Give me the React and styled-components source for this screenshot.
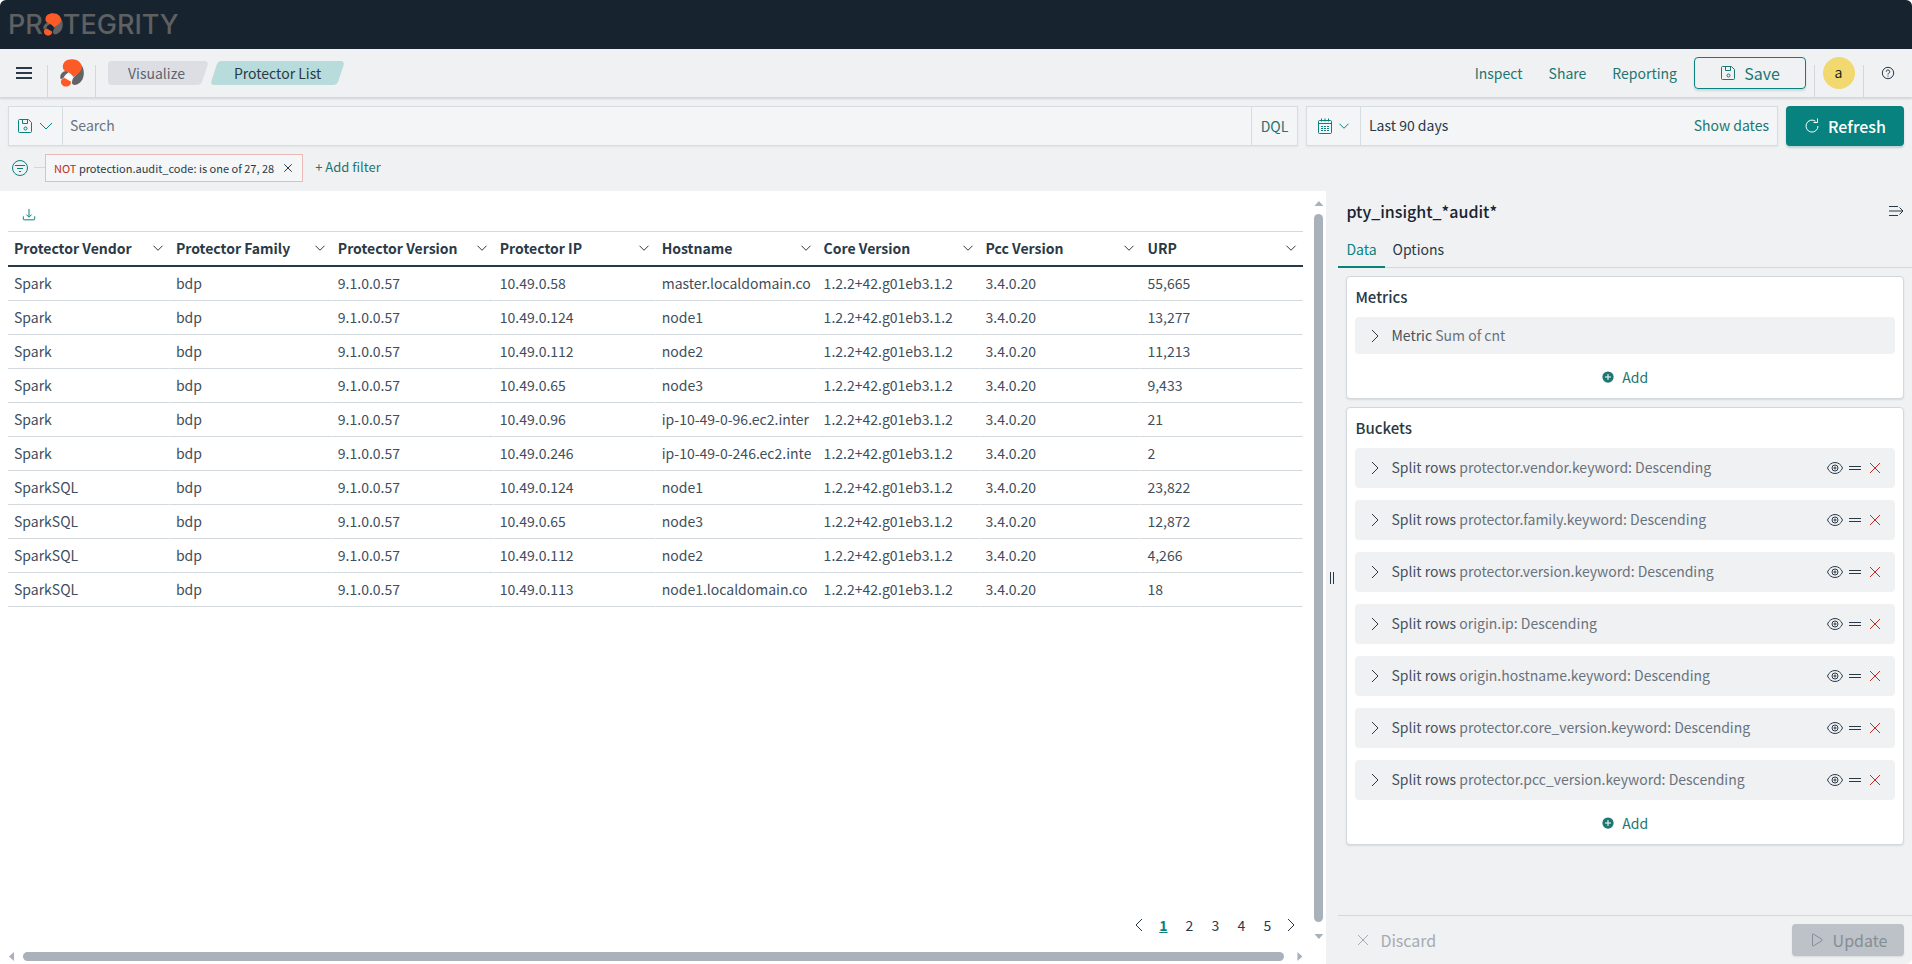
import React from 'react';
import styled, { createGlobalStyle, css } from 'styled-components';

const columns = [
  'Protector Vendor',
  'Protector Family',
  'Protector Version',
  'Protector IP',
  'Hostname',
  'Core Version',
  'Pcc Version',
  'URP',
];

const hosts = [
  ['Spark', '10.49.0.58', 'master.localdomain.co', '55,665'],
  ['Spark', '10.49.0.124', 'node1', '13,277'],
  ['Spark', '10.49.0.112', 'node2', '11,213'],
  ['Spark', '10.49.0.65', 'node3', '9,433'],
  ['Spark', '10.49.0.96', 'ip-10-49-0-96.ec2.inter', '21'],
  ['Spark', '10.49.0.246', 'ip-10-49-0-246.ec2.inte', '2'],
  ['SparkSQL', '10.49.0.124', 'node1', '23,822'],
  ['SparkSQL', '10.49.0.65', 'node3', '12,872'],
  ['SparkSQL', '10.49.0.112', 'node2', '4,266'],
  ['SparkSQL', '10.49.0.113', 'node1.localdomain.co', '18'],
];

const rows = hosts.map(([vendor, ip, host, urp]) => [
  vendor,
  'bdp',
  '9.1.0.0.57',
  ip,
  host,
  '1.2.2+42.g01eb3.1.2',
  '3.4.0.20',
  urp,
]);

const buckets = [
  'protector.vendor.keyword',
  'protector.family.keyword',
  'protector.version.keyword',
  'origin.ip',
  'origin.hostname.keyword',
  'protector.core_version.keyword',
  'protector.pcc_version.keyword',
];

const Icon = ({ size = 16, children }) => (
  <Svg width={size} height={size} viewBox='0 0 16 16' aria-hidden='true'>
    {children}
  </Svg>
);

const SaveIcon = () => (
  <Icon>
    <path d='M2.5 1.5h9l3 3v9a1 1 0 0 1-1 1h-11a1 1 0 0 1-1-1v-11a1 1 0 0 1 1-1z' />
    <path d='M5.5 1.5v4h5v-4' />
    <circle cx='8.5' cy='10.5' r='1.5' />
  </Icon>
);

const ChevronDown = ({ size }) => (
  <Icon size={size}>
    <path d='M2 5l6 6 6-6' />
  </Icon>
);

const ChevronRight = () => (
  <Icon>
    <path d='M5 2l6 6-6 6' />
  </Icon>
);

const ChevronLeft = () => (
  <Icon>
    <path d='M11 2L5 8l6 6' />
  </Icon>
);

const CrossIcon = ({ size }) => (
  <Icon size={size}>
    <path d='M3 3l10 10M13 3L3 13' />
  </Icon>
);

const CalendarIcon = () => (
  <Icon>
    <rect x='1.5' y='2.5' width='13' height='13' rx='1' />
    <path d='M4.5 0.5v3M8 0.5v3M11.5 0.5v3M2 5.5h12' />
    <path d='M4 8.5h2M7 8.5h2M10 8.5h2M4 10.5h2M7 10.5h2M10 10.5h2M4 12.5h2M7 12.5h2M10 12.5h2' />
  </Icon>
);

const RefreshIcon = () => (
  <Icon>
    <path d='M11.5 3.2A6 6 0 1 0 14 8' />
    <path d='M13.5 0.5v4h-4' />
  </Icon>
);

const HelpIcon = () => (
  <Icon size={14}>
    <circle cx='8' cy='8' r='6.5' />
    <path d='M6 6.5a2 2 0 1 1 2.6 1.9c-.4.1-.6.4-.6.8v.6M8 11v1.2' />
  </Icon>
);

const FilterIcon = () => (
  <Icon>
    <circle cx='8' cy='8' r='7.5' />
    <path d='M3 5.5h10M5 8.5h6M7 11.5h2' />
  </Icon>
);

const DownloadIcon = () => (
  <Icon size={14}>
    <path d='M8 1v9M5 7.5l3 3 3-3' />
    <path d='M1.5 9.5v3a1 1 0 0 0 1 1h11a1 1 0 0 0 1-1v-3' />
  </Icon>
);

const CollapseIcon = () => (
  <Icon>
    <path d='M1 3.5h9M1 8h13.5M1 12.5h9M11.5 4.5L15 8l-3.5 3.5' />
  </Icon>
);

const EyeIcon = () => (
  <Icon>
    <path d='M0.5 8C2 4.5 4.8 2.5 8 2.5S14 4.5 15.5 8C14 11.5 11.2 13.5 8 13.5S2 11.5 0.5 8z' />
    <circle cx='8' cy='8' r='3' />
    <circle cx='8' cy='8' r='1' />
  </Icon>
);

const GrabIcon = () => (
  <Icon>
    <path d='M2 6.5h12M2 9.5h12' />
  </Icon>
);

const PlayIcon = () => (
  <Icon>
    <path d='M3.5 2.7v10.600a.7.7 0 0 0 1 .6l8.500-5.300a.7.7 0 0 0 0-1.200L4.500 2.100a.7.7 0 0 0-1 .6z' />
  </Icon>
);

const PlusIcon = () => (
  <Svg width='12' height='12' viewBox='0 0 16 16' aria-hidden='true'>
    <circle cx='8' cy='8' r='7.5' fill='currentColor' stroke='none' />
    <path d='M8 4v8M4 8h8' stroke='#fff' />
  </Svg>
);

const Mark = ({ width, height, band }) => (
  <svg width={width} height={height} viewBox='0 0 24 28' aria-hidden='true'>
    <path d='M21.500 6c2.500 3.500 3 9 1.500 13-1.500 4-5 7-8.500 7-1.500 0-2.500-1-2.500-2.500 0-3 1.500-5.500 4.500-8 3-2.500 5-5 5-9.500z' fill='#626366' />
    <path d='M0.500 20C-.5 15.500 2 12 8 11.500L8 14c-1.500.5-2.500 1.500-3.500 3-.5 1.500-1.500 3-4 3z' fill='#626366' />
    <path d='M2.800 8C2.800 3 6.500.3 12 .3c5.500 0 9.800 3.500 9.800 7.900 0 4.300-4 6.300-8.300 9.800C12 16 10.500 14.300 8.500 13.500 5 12.500 2.800 11 2.800 8z' fill='#fc5a27' />
    <path d='M1 22c.5-2 2-3 4-3l5.800 3c.7 2.500-.8 5-3.800 5.500-3.500.5-6.500-2-6-5.500z' fill='#fc5a27' />
    <path d='M7.500 14.500l5 3.800-1.700 4.200L4.800 19z' fill={band} />
  </svg>
);

const Bucket = ({ field }) => (
  <Accordion $tall>
    <AccordionToggle type='button'>
      <ChevronRight />
      <AccordionText>
        Split rows <Muted>{field}: Descending</Muted>
      </AccordionText>
    </AccordionToggle>
    <RowActions>
      <IconButton type='button' aria-label='Disable aggregation'>
        <EyeIcon />
      </IconButton>
      <IconButton type='button' aria-label='Change order'>
        <GrabIcon />
      </IconButton>
      <IconButton type='button' aria-label='Remove dimension' $danger>
        <CrossIcon />
      </IconButton>
    </RowActions>
  </Accordion>
);

const App = () => {
  return (
    <Page>
      <GlobalStyle />
      <TopBar>
        <Brand>
          <span>PR</span>
          <Mark width={20} height={23} band='#17242f' />
          <span>TEGRITY</span>
        </Brand>
      </TopBar>

      <Header>
        <HeaderCell>
          <IconButton type='button' aria-label='Toggle navigation'>
            <Svg width='16' height='12' viewBox='0 0 16 12' aria-hidden='true'>
              <path d='M0 1h16M0 6h16M0 11h16' strokeWidth='2' />
            </Svg>
          </IconButton>
        </HeaderCell>
        <HeaderCell>
          <HomeLink href='#' aria-label='Home'>
            <Mark width={24} height={28} band='#fff' />
          </HomeLink>
        </HeaderCell>
        <Breadcrumbs aria-label='Breadcrumbs'>
          <CrumbFirst href='#'>Visualize</CrumbFirst>
          <CrumbLast aria-current='page'>Protector List</CrumbLast>
        </Breadcrumbs>
        <Menu>
          <TextLink href='#'>Inspect</TextLink>
          <TextLink href='#'>Share</TextLink>
          <TextLink href='#'>Reporting</TextLink>
          <SaveButton type='button'>
            <SaveIcon />
            Save
          </SaveButton>
        </Menu>
        <HeaderSide>
          <Avatar type='button'>a</Avatar>
        </HeaderSide>
        <HeaderSide>
          <IconButton type='button' aria-label='Help'>
            <HelpIcon />
          </IconButton>
        </HeaderSide>
      </Header>

      <QueryBar>
        <Group $grow>
          <GroupButton type='button' aria-label='Saved queries'>
            <SaveIcon />
            <ChevronDown size={16} />
          </GroupButton>
          <SearchInput type='text' placeholder='Search' aria-label='Search' />
          <DqlButton type='button'>DQL</DqlButton>
        </Group>
        <Group>
          <GroupButton type='button' aria-label='Quick select'>
            <CalendarIcon />
            <ChevronDown size={12} />
          </GroupButton>
          <DateButton type='button'>
            Last 90 days
            <Teal>Show dates</Teal>
          </DateButton>
        </Group>
        <RefreshButton type='button'>
          <RefreshIcon />
          Refresh
        </RefreshButton>
      </QueryBar>

      <FilterBar>
        <IconButton type='button' aria-label='Change all filters' $teal>
          <FilterIcon />
        </IconButton>
        <Branch />
        <FilterPill>
          <span>
            <Not>NOT</Not> protection.audit_code: is one of 27, 28
          </span>
          <IconButton type='button' aria-label='Delete filter'>
            <CrossIcon size={12} />
          </IconButton>
        </FilterPill>
        <AddFilter type='button'>+ Add filter</AddFilter>
      </FilterBar>

      <Main>
        <Visualization>
          <VisBody>
            <VisContent>
              <TableToolbar>
                <IconButton type='button' aria-label='Download' $teal>
                  <DownloadIcon />
                </IconButton>
              </TableToolbar>
              <Table>
                <thead>
                  <tr>
                    {columns.map((c) => (
                      <Th key={c} scope='col'>
                        <ThInner type='button'>
                          {c}
                          <ChevronDown size={12} />
                        </ThInner>
                      </Th>
                    ))}
                  </tr>
                </thead>
                <tbody>
                  {rows.map((row, i) => (
                    <tr key={i}>
                      {row.map((cell, j) => (
                        <Td key={j}>
                          <Clip>{cell}</Clip>
                        </Td>
                      ))}
                    </tr>
                  ))}
                </tbody>
              </Table>
              <Pagination aria-label='Pagination'>
                <PageButton type='button' aria-label='Previous page' $arrow>
                  <ChevronLeft />
                </PageButton>
                {[1, 2, 3, 4, 5].map((n) => (
                  <PageButton type='button' key={n} $active={n === 1}>
                    {n}
                  </PageButton>
                ))}
                <PageButton type='button' aria-label='Next page' $arrow>
                  <ChevronRight />
                </PageButton>
              </Pagination>
            </VisContent>
            <ScrollY>
              <Arrow $dir='up' />
              <Thumb />
              <Arrow $dir='down' />
            </ScrollY>
          </VisBody>
          <ScrollX>
            <Arrow $dir='left' />
            <Thumb />
            <Arrow $dir='right' />
          </ScrollX>
        </Visualization>

        <Resizer>
          <Svg width='4' height='12' viewBox='0 0 4 12' aria-hidden='true'>
            <path d='M0.5 0v12M3.5 0v12' />
          </Svg>
        </Resizer>

        <Sidebar>
          <SidebarHead>
            <SidebarTitle>pty_insight_*audit*</SidebarTitle>
            <IconButton type='button' aria-label='Toggle sidebar'>
              <CollapseIcon />
            </IconButton>
          </SidebarHead>
          <Tabs role='tablist'>
            <Tab type='button' role='tab' aria-selected='true' $active>
              Data
            </Tab>
            <Tab type='button' role='tab' aria-selected='false'>
              Options
            </Tab>
          </Tabs>
          <Panels>
            <Panel>
              <PanelTitle>Metrics</PanelTitle>
              <Accordion>
                <AccordionToggle type='button'>
                  <ChevronRight />
                  <AccordionText>
                    Metric <Muted>Sum of cnt</Muted>
                  </AccordionText>
                </AccordionToggle>
              </Accordion>
              <AddButton type='button'>
                <PlusIcon />
                Add
              </AddButton>
            </Panel>
            <Panel>
              <PanelTitle>Buckets</PanelTitle>
              <BucketList>
                {buckets.map((b) => (
                  <Bucket key={b} field={b} />
                ))}
              </BucketList>
              <AddButton type='button'>
                <PlusIcon />
                Add
              </AddButton>
            </Panel>
          </Panels>
          <SidebarFooter>
            <DiscardButton type='button' disabled>
              <CrossIcon />
              Discard
            </DiscardButton>
            <UpdateButton type='button' disabled>
              <PlayIcon />
              Update
            </UpdateButton>
          </SidebarFooter>
        </Sidebar>
      </Main>
    </Page>
  );
};

export default App;

const GlobalStyle = createGlobalStyle`
  * {
    box-sizing: border-box;
  }

  body {
    margin: 0;
    background: #fff;
    color: #2a3947;
    font-family: 'Noto Sans CJK JP', 'Noto Sans CJK SC', sans-serif;
    font-size: 14px;
    line-height: 20px;
  }

  button,
  input {
    margin: 0;
    padding: 0;
    border: 0;
    background: none;
    color: inherit;
    font: inherit;
  }

  a {
    color: inherit;
    text-decoration: none;
  }
`;

const Svg = styled.svg`
  display: block;
  flex: none;
  fill: none;
  stroke: currentColor;

  & > * {
    vector-effect: non-scaling-stroke;
  }
`;

const Page = styled.div`
  display: flex;
  flex-direction: column;
  min-height: 100vh;
  border-radius: 6px;
  overflow: hidden;
  background: #f0f1f3;
`;

const TopBar = styled.div`
  display: flex;
  align-items: center;
  height: 49px;
  padding: 0 8px;
  background: #17242f;
`;

const Brand = styled.div`
  display: flex;
  align-items: center;
  color: #5f6062;
  font-family: Inter, sans-serif;
  font-size: 27px;
  font-weight: 500;
  line-height: 28px;
`;

const Header = styled.header`
  display: flex;
  height: 49px;
  border-bottom: 1px solid #d3d8dc;
  box-shadow: 0 1px 2px rgba(0, 0, 0, 0.12);
`;

const HeaderCell = styled.div`
  display: flex;
  align-items: center;
  justify-content: center;
  width: 48px;
  background: linear-gradient(#d3d8dc, #d3d8dc) right bottom / 1px 32px no-repeat;
`;

const HeaderSide = styled.div`
  display: flex;
  align-items: center;
  justify-content: center;
  width: 49px;
  background: linear-gradient(#d3d8dc, #d3d8dc) left bottom / 1px 32px no-repeat;
`;

const HomeLink = styled.a`
  display: flex;
`;

const Breadcrumbs = styled.nav`
  display: flex;
  align-items: center;
  flex: 1;
  gap: 9px;
  padding-left: 12px;
`;

const crumb = css`
  position: relative;
  z-index: 0;
  height: 24px;
  line-height: 24px;

  &::before {
    content: '';
    position: absolute;
    z-index: -1;
    inset: 0;
    border-radius: 4px;
    transform: skewX(-18deg);
  }
`;

const CrumbFirst = styled.a`
  ${crumb}
  padding: 0 20px;
  color: #5c6370;
  border-radius: 4px;
  background: linear-gradient(#dcdee4, #dcdee4) left / 50% 100% no-repeat;

  &::before {
    left: 40%;
    background: #dcdee4;
  }
`;

const CrumbLast = styled.span`
  ${crumb}
  padding: 0 20px;

  &::before {
    background: #b7dcdb;
  }
`;

const Menu = styled.nav`
  display: flex;
  align-items: center;
  gap: 26px;
  padding-right: 8px;
`;

const TextLink = styled.a`
  color: #1c7671;
`;

const bigButton = css`
  display: flex;
  align-items: center;
  justify-content: center;
  border-radius: 4px;
  font-size: 16px;
`;

const SaveButton = styled.button`
  ${bigButton}
  gap: 8px;
  width: 112px;
  height: 32px;
  margin-left: -9px;
  border: 1px solid #07827e;
  color: #1c7671;
  box-shadow: 0 2px 2px rgba(0, 80, 80, 0.14);
`;

const Avatar = styled.button`
  width: 32px;
  height: 32px;
  padding-bottom: 2px;
  border-radius: 50%;
  background: #f1d86f;
  color: #222;
`;

const IconButton = styled.button`
  display: flex;
  color: ${(p) => (p.$danger ? '#c22a24' : p.$teal ? '#07827e' : '#2a3947')};
`;

const QueryBar = styled.div`
  display: flex;
  gap: 8px;
  padding: 8px 8px 0;
`;

const Group = styled.div`
  display: flex;
  flex: ${(p) => (p.$grow ? '1' : '0 0 472px')};
  height: 40px;
  border: 1px solid #d5dde0;
  background: #f3f5f6;
  box-shadow: 0 1px 2px rgba(0, 0, 0, 0.06);
`;

const GroupButton = styled.button`
  display: flex;
  align-items: center;
  justify-content: center;
  gap: 5px;
  width: 54px;
  border-right: 1px solid #d5dde0;
  color: #07827e;
`;

const SearchInput = styled.input`
  flex: 1;
  min-width: 0;
  padding: 0 7px 2px;
  outline: none;

  &::placeholder {
    color: #69737d;
    opacity: 1;
  }
`;

const DqlButton = styled.button`
  width: 46px;
  border-left: 1px solid #d5dde0;
  color: #1c7671;
`;

const DateButton = styled.button`
  display: flex;
  flex: 1;
  align-items: center;
  justify-content: space-between;
  padding: 0 8px 2px;
`;

const Teal = styled.span`
  color: #1c7671;
`;

const RefreshButton = styled.button`
  ${bigButton}
  gap: 8px;
  width: 118px;
  height: 40px;
  background: #07827e;
  color: #fff;
  font-weight: 500;
  box-shadow: 0 2px 2px rgba(0, 80, 80, 0.2);
`;

const FilterBar = styled.div`
  display: flex;
  align-items: center;
  height: 45px;
  padding: 0 12px 2px;
`;

const Branch = styled.div`
  width: 11px;
  height: 1px;
  margin-left: 6px;
  background: #d3d8dc;
`;

const FilterPill = styled.div`
  display: flex;
  align-items: center;
  gap: 8px;
  height: 28px;
  padding: 0 8px;
  border: 1px solid #ebb9b9;
  background: #f5f6f7;
  font-size: 11px;
`;

const Not = styled.span`
  color: #c22a24;
`;

const AddFilter = styled.button`
  margin-left: 12px;
  padding-bottom: 2px;
  color: #1c7671;
  font-size: 13px;
`;

const Main = styled.main`
  display: flex;
  flex: 1;
`;

const Visualization = styled.section`
  display: flex;
  flex: 1;
  flex-direction: column;
  min-width: 0;
  background: #fff;
`;

const VisBody = styled.div`
  display: flex;
  flex: 1;
`;

const VisContent = styled.div`
  display: flex;
  flex: 1;
  flex-direction: column;
  min-width: 0;
  padding: 0 11px 0 8px;
`;

const TableToolbar = styled.div`
  height: 40px;
  padding: 17px 14px 0;
`;

const Table = styled.table`
  width: 100%;
  table-layout: fixed;
  border-spacing: 0;
`;

const Th = styled.th`
  height: 36px;
  padding: 0 6px 2px;
  border-top: 1px solid #d3d8dc;
  border-bottom: 2px solid #2a3947;
`;

const ThInner = styled.button`
  display: flex;
  align-items: center;
  justify-content: space-between;
  width: 100%;
  font-weight: 700;
`;

const Td = styled.td`
  height: 34px;
  padding: 0 6px 2px;
  border-right: 1px solid #fff;
  border-bottom: 1px solid #d3d8dc;
  color: #3f4e5c;
`;

const Clip = styled.div`
  overflow: hidden;
  white-space: nowrap;
`;

const Pagination = styled.nav`
  display: flex;
  justify-content: flex-end;
  gap: 2px;
  margin-top: auto;
  padding: 0 2px 8px 0;
`;

const PageButton = styled.button`
  display: flex;
  align-items: center;
  justify-content: center;
  width: ${(p) => (p.$arrow ? '20px' : '24px')};
  height: 24px;

  ${(p) =>
    p.$active &&
    css`
      color: #07827e;
      font-weight: 700;
      text-decoration: underline;
    `}
`;

const ScrollY = styled.div`
  display: flex;
  flex-direction: column;
  gap: 8px;
  width: 9px;
  margin: 10px 3px 6px 0;
  align-items: center;
`;

const ScrollX = styled.div`
  display: flex;
  align-items: center;
  gap: 9px;
  height: 19px;
  padding: 4px 24px 0 9px;
`;

const Thumb = styled.div`
  flex: 1;
  min-width: 9px;
  min-height: 9px;
  border-radius: 5px;
  background: #a9b1ba;
`;

const arrows = {
  up: css`
    width: 9px;
    height: 5px;
    clip-path: polygon(50% 0, 100% 100%, 0 100%);
  `,
  down: css`
    width: 9px;
    height: 5px;
    margin-top: 4px;
    clip-path: polygon(0 0, 100% 0, 50% 100%);
  `,
  left: css`
    width: 5px;
    height: 9px;
    clip-path: polygon(0 50%, 100% 0, 100% 100%);
  `,
  right: css`
    width: 5px;
    height: 9px;
    margin-left: 4px;
    clip-path: polygon(0 0, 100% 50%, 0 100%);
  `,
};

const Arrow = styled.div`
  background: #a9b1ba;
  ${(p) => arrows[p.$dir]}
`;

const Resizer = styled.div`
  display: flex;
  align-items: center;
  justify-content: center;
  width: 12px;
`;

const Sidebar = styled.aside`
  display: flex;
  flex: 0 0 30%;
  flex-direction: column;
`;

const SidebarHead = styled.div`
  display: flex;
  align-items: center;
  justify-content: space-between;
  height: 40px;
  padding: 0 8px;
`;

const SidebarTitle = styled.h2`
  margin: 0;
  font-size: 16px;
  font-weight: 500;
  color: #17242f;
`;

const Tabs = styled.div`
  display: flex;
  height: 37px;
  box-shadow: inset 0 -1px #d3d8dc;
`;

const Tab = styled.button`
  padding: 0 8px;
  border-bottom: 2px solid ${(p) => (p.$active ? '#07827e' : 'transparent')};
  color: ${(p) => (p.$active ? '#07827e' : '#2a3947')};
`;

const Panels = styled.div`
  display: flex;
  flex: 1;
  flex-direction: column;
  gap: 8px;
  padding: 8px;
`;

const Panel = styled.section`
  padding: 8px;
  border: 1px solid #d3d8dc;
  border-radius: 4px;
  background: #fff;
  box-shadow: 0 1px 2px rgba(0, 0, 0, 0.1);
`;

const PanelTitle = styled.h3`
  margin: 0 0 8px;
  font-size: 15px;
  line-height: 24px;
  font-weight: 500;
`;

const BucketList = styled.div`
  display: flex;
  flex-direction: column;
  gap: 12px;
`;

const Accordion = styled.div`
  display: flex;
  align-items: center;
  justify-content: space-between;
  height: ${(p) => (p.$tall ? '40px' : '37px')};
  padding: 0 12px;
  border-radius: 4px;
  background: #f0f1f3;
`;

const AccordionToggle = styled.button`
  display: flex;
  align-items: center;
  gap: 8px;
`;

const AccordionText = styled.span`
  padding-bottom: 2px;
  color: #45525f;
`;

const Muted = styled.span`
  color: #69737d;
`;

const RowActions = styled.div`
  display: flex;
  align-items: center;
  gap: 4px;
`;

const AddButton = styled.button`
  display: flex;
  align-items: center;
  gap: 8px;
  height: 24px;
  margin: 12px auto 0;
  padding-bottom: 2px;
  color: #1c7671;
`;

const SidebarFooter = styled.div`
  display: flex;
  align-items: center;
  justify-content: space-between;
  height: 49px;
  padding: 0 8px;
  border-top: 1px solid #d3d8dc;
`;

const DiscardButton = styled.button`
  ${bigButton}
  gap: 9px;
  padding: 0 9px;
  color: #a5abb1;
`;

const UpdateButton = styled.button`
  ${bigButton}
  gap: 8px;
  width: 112px;
  height: 32px;
  background: #bcc2c8;
  color: #868d94;
  box-shadow: 0 1px 2px rgba(0, 0, 0, 0.1);
`;
